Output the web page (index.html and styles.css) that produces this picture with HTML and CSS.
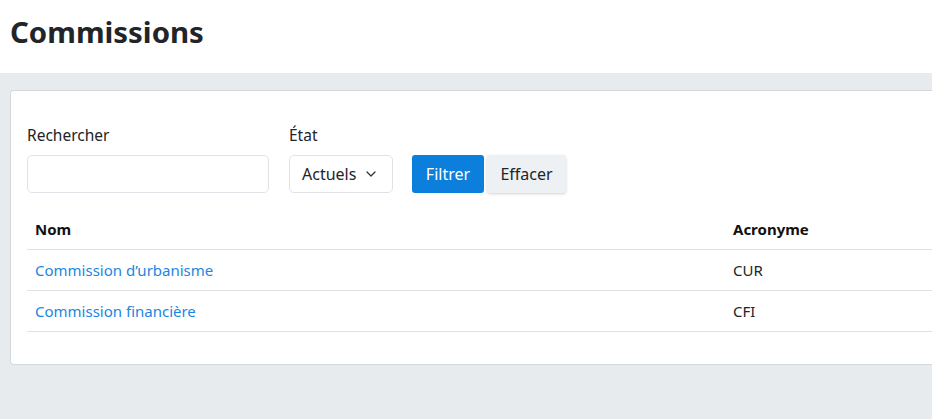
FILE: index.html
```html
<!DOCTYPE html>
<html lang="fr">
<head>
<meta charset="utf-8">
<title>Commissions</title>
<link rel="stylesheet" href="styles.css">
</head>
<body>
<header class="page-header">
  <h1 class="title">Commissions</h1>
</header>
<main class="content">
  <section class="card">
    <form class="filters">
      <div class="field">
        <label class="label" for="q">Rechercher</label>
        <input class="input" id="q" type="text">
      </div>
      <div class="field">
        <label class="label">État</label>
        <div class="select">
          <span>Actuels</span>
          <svg class="chevron" width="10" height="6" viewBox="0 0 10 6"><path d="M1 1l4 4 4-4" fill="none" stroke="#333" stroke-width="1.3" stroke-linecap="round" stroke-linejoin="round"/></svg>
        </div>
      </div>
      <div class="actions">
        <button type="button" class="btn btn-primary">Filtrer</button>
        <button type="button" class="btn btn-light">Effacer</button>
      </div>
    </form>
    <table class="table">
      <thead>
        <tr><th class="col-name">Nom</th><th>Acronyme</th></tr>
      </thead>
      <tbody>
        <tr><td><a href="#" class="link">Commission d’urbanisme</a></td><td>CUR</td></tr>
        <tr><td><a href="#" class="link">Commission financière</a></td><td>CFI</td></tr>
      </tbody>
    </table>
  </section>
</main>
</body>
</html>
```

FILE: styles.css
```css
html, body {
  margin: 0;
  padding: 0;
}
body {
  font-family: "Noto Sans", "Open Sans", sans-serif;
  color: #212529;
  background: #e7ebee;
  overflow: hidden;
  height: 419px;
}
.page-header {
  background: #fff;
  height: 73px;
  padding: 0 10px;
  box-sizing: border-box;
}
.title {
  margin: 0;
  padding-top: 12px;
  font-size: 29.4px;
  line-height: 40px;
  font-weight: 700;
  color: #212529;
}
.content {
  padding: 17px 0 0 10px;
}
.card {
  background: #fff;
  border: 1px solid #d4d8dc;
  border-right: 0;
  border-radius: 4px 0 0 4px;
  padding: 33px 0 32px 16px;
  box-sizing: border-box;
}
.filters {
  display: flex;
  align-items: flex-end;
  gap: 20px;
}
.field {
  display: flex;
  flex-direction: column;
}
.label {
  font-size: 15.5px;
  line-height: 22px;
  margin-bottom: 9px;
  color: #212529;
}
.input {
  width: 242px;
  height: 38px;
  box-sizing: border-box;
  border: 1px solid #dfe3e7;
  border-radius: 5px;
  font: inherit;
  padding: 0 10px;
  outline: none;
}
.select {
  width: 104px;
  height: 38px;
  box-sizing: border-box;
  border: 1px solid #dfe3e7;
  border-radius: 5px;
  display: flex;
  align-items: center;
  padding: 0 12px;
  gap: 10px;
  font-size: 16px;
  color: #212529;
}
.chevron {
  display: block;
}
.actions {
  display: flex;
  gap: 3px;
  margin-left: -1px;
}
.btn {
  height: 38px;
  border: none;
  border-radius: 3px;
  font-family: inherit;
  font-size: 16px;
  padding: 0;
  cursor: pointer;
}
.btn-primary {
  background: #0c7fdc;
  color: #fff;
  width: 72px;
}
.btn-light {
  background: #eef1f4;
  color: #212529;
  width: 79px;
  box-shadow: 0 1px 3px rgba(0, 0, 0, 0.18);
}
.table {
  margin-top: 16px;
  width: 100%;
  border-collapse: collapse;
  font-size: 15px;
}
.table th {
  text-align: left;
  font-weight: 700;
  color: #111;
  height: 40px;
  padding: 0 8px;
  border-bottom: 1px solid #dee2e6;
}
.table .col-name {
  width: 682px;
}
.table td {
  height: 40px;
  padding: 0 8px;
  border-bottom: 1px solid #dee2e6;
  color: #212529;
}
.link {
  color: #1a86e2;
  text-decoration: none;
}
```
